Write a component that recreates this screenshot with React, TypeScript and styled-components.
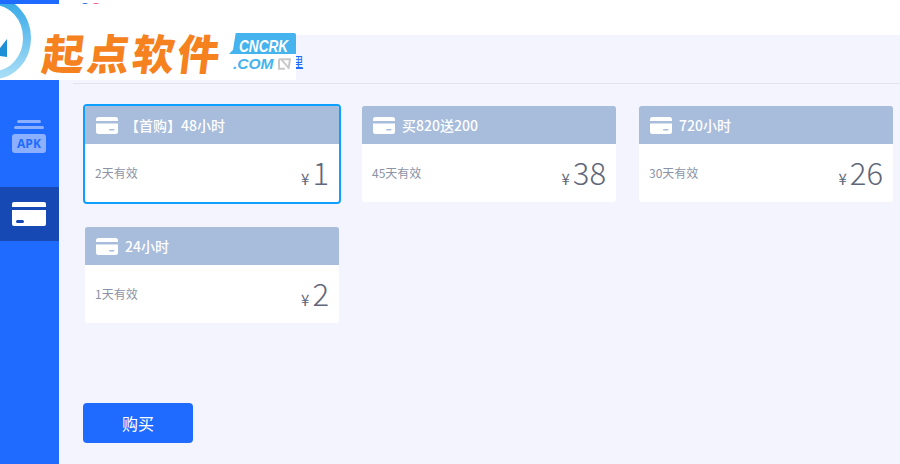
import React from "react";
import styled, { createGlobalStyle } from "styled-components";

interface PlanProps {
  title: string;
  days: string;
  price: number;
  selected?: boolean;
}

const plans: PlanProps[] = [
  { title: "【首购】48小时", days: "2天有效", price: 1, selected: true },
  { title: "买820送200", days: "45天有效", price: 38 },
  { title: "720小时", days: "30天有效", price: 26 },
  { title: "24小时", days: "1天有效", price: 2 },
];

const CardIcon = () => (
  <svg width="22" height="17" viewBox="0 0 22 17">
    <path d="M2.5 0h17A2.5 2.5 0 0 1 22 2.5V4H0V2.5A2.5 2.5 0 0 1 2.5 0z" fill="#fff" />
    <path d="M0 6.5h22v8a2.5 2.5 0 0 1-2.5 2.5h-17A2.5 2.5 0 0 1 0 14.5z" fill="#fff" />
    <rect x="13" y="12" width="5.5" height="1.6" rx="0.8" fill="#a8bcdb" />
  </svg>
);

const ApkIcon = () => (
  <ApkWrap>
    <ApkLine $w={24} />
    <ApkLine $w={30} />
    <ApkBadge>APK</ApkBadge>
  </ApkWrap>
);

const Plan: React.FC<PlanProps> = ({ title, days, price, selected }) => (
  <PlanCard $selected={selected}>
    <PlanHeader>
      <CardIcon />
      <PlanTitle>{title}</PlanTitle>
    </PlanHeader>
    <PlanBody>
      <PlanDays>{days}</PlanDays>
      <PlanPrice>
        <Yen>¥</Yen>
        <Amount>{price}</Amount>
      </PlanPrice>
    </PlanBody>
  </PlanCard>
);

export default function App() {
  return (
    <Page>
      <GlobalStyle />
      <Sidebar>
        <SideItem>
          <ApkIcon />
        </SideItem>
        <SideItem $active>
          <SideCard>
            <SideCardStripe />
            <SideCardMark />
          </SideCard>
        </SideItem>
      </Sidebar>
      <Main>
        <TopBar>
          <TopDot $color="#2f6fe8" />
          <TopDot $color="#e8578a" />
        </TopBar>
        <TabRow>
          <TabLink>理</TabLink>
        </TabRow>
        <Content>
          <PlanGrid>
            {plans.map((plan) => (
              <Plan key={plan.title} {...plan} />
            ))}
          </PlanGrid>
          <BuyButton>购买</BuyButton>
        </Content>
      </Main>
      <LogoOverlay>
        <LogoMark width="40" height="76" viewBox="0 0 40 76">
          <defs>
            <linearGradient id="ring" x1="0" y1="0" x2="0" y2="1">
              <stop offset="0" stopColor="#35a9e8" />
              <stop offset="1" stopColor="#a5dcf6" />
            </linearGradient>
          </defs>
          <ellipse cx="-6" cy="34" rx="33" ry="37" fill="none" stroke="url(#ring)" strokeWidth="8" />
          <path d="M0 44L7 35V53L0 52z" fill="#1d8fd6" />
        </LogoMark>
        <LogoText>起点软件</LogoText>
        <LogoSide>
          <LogoTag>
            <LogoTagText>CNCRK</LogoTagText>
          </LogoTag>
          <LogoCom>
            .COM
            <svg width="13" height="12" viewBox="0 0 13 12">
              <path d="M1 1.2h11L10.5 11M3 1.2l7.5 8.5M1 1.2v9.6h6" stroke="#c9c9c9" strokeWidth="2" fill="none" />
            </svg>
          </LogoCom>
        </LogoSide>
      </LogoOverlay>
    </Page>
  );
}

const GlobalStyle = createGlobalStyle`
  html, body {
    margin: 0;
    padding: 0;
    background: #f3f4fd;
  }
  * {
    box-sizing: border-box;
  }
`;

const Page = styled.div`
  position: relative;
  display: flex;
  width: 900px;
  height: 464px;
  overflow: hidden;
  font-family: "Noto Sans CJK SC", "Open Sans", sans-serif;
  background: #f3f4fd;
`;

const Sidebar = styled.div`
  width: 59px;
  flex: none;
  padding-top: 106px;
  background: #1f6bff;
`;

const SideItem = styled.div<{ $active?: boolean }>`
  display: flex;
  align-items: center;
  justify-content: center;
  height: ${(p) => (p.$active ? "54px" : "81px")};
  padding-right: 1px;
  background: ${(p) => (p.$active ? "#1749b5" : "transparent")};
`;

const ApkWrap = styled.div`
  display: flex;
  flex-direction: column;
  align-items: center;
  gap: 3px;
  margin-top: -20px;
`;

const ApkLine = styled.div<{ $w: number }>`
  width: ${(p) => p.$w}px;
  height: 3px;
  border-radius: 2px;
  background: #8cb0ff;
`;

const ApkBadge = styled.div`
  width: 34px;
  height: 19px;
  margin-top: 2px;
  border-radius: 3px;
  background: #8cb0ff;
  color: #1f6bff;
  font: bold 12px/19px "Open Sans", sans-serif;
  text-align: center;
`;

const SideCard = styled.div`
  position: relative;
  width: 34px;
  height: 24px;
  padding-top: 5px;
  border-radius: 2px;
  background: #fff;
`;

const SideCardStripe = styled.div`
  height: 3px;
  background: #1749b5;
`;

const SideCardMark = styled.div`
  position: absolute;
  left: 4px;
  bottom: 3px;
  width: 8px;
  height: 3px;
  border-radius: 2px;
  background: #1749b5;
`;

const Main = styled.div`
  flex: 1;
  display: flex;
  flex-direction: column;
  min-width: 0;
`;

const TopBar = styled.div`
  display: flex;
  gap: 1px;
  height: 35px;
  padding: 3px 0 0 21px;
  background: #fff;
`;

const TopDot = styled.div<{ $color: string }>`
  width: 10px;
  height: 8px;
  border-radius: 5px 5px 0 0;
  background: ${(p) => p.$color};
`;

const TabRow = styled.div`
  height: 49px;
  margin-left: 14px;
  padding: 13px 0 0 216px;
  border-bottom: 1px solid #e3e4ea;
`;

const TabLink = styled.span`
  color: #1f6bff;
  font-size: 14px;
  line-height: 22px;
  text-decoration: underline;
`;

const Content = styled.div`
  padding: 20px 0 0 24px;
`;

const PlanGrid = styled.div`
  display: grid;
  grid-template-columns: repeat(3, 258px);
  grid-auto-rows: 100px;
  column-gap: 19px;
  row-gap: 21px;
  height: 299px;
`;

const PlanCard = styled.div<{ $selected?: boolean }>`
  display: flex;
  flex-direction: column;
  height: 100px;
  border: 2px solid ${(p) => (p.$selected ? "#0f9fff" : "transparent")};
  border-radius: 4px;
  overflow: hidden;
`;

const PlanHeader = styled.div`
  display: flex;
  align-items: center;
  flex: none;
  height: 38px;
  padding-left: 11px;
  border-radius: 2px 2px 0 0;
  background: #a8bcdb;
`;

const PlanTitle = styled.span`
  margin: -1px 0 0 7px;
  color: #fff;
  font-size: 14px;
  font-weight: 500;
`;

const PlanBody = styled.div`
  display: flex;
  flex: 1;
  align-items: center;
  justify-content: space-between;
  padding: 0 10px;
  border-radius: 0 0 2px 2px;
  background: #fff;
`;

const PlanDays = styled.span`
  margin-top: -1px;
  color: #8b93a6;
  font-size: 12px;
`;

const PlanPrice = styled.div`
  display: flex;
  align-items: baseline;
  margin-top: -2px;
  color: #5f677a;
`;

const Yen = styled.span`
  margin-right: 3px;
  font-size: 15px;
`;

const Amount = styled.span`
  font-size: 31px;
  font-weight: 300;
  line-height: 40px;
`;

const BuyButton = styled.button`
  display: block;
  width: 110px;
  height: 40px;
  padding: 0;
  border: none;
  border-radius: 4px;
  background: #1f6bff;
  color: #fff;
  font-family: inherit;
  font-size: 16px;
`;

const LogoOverlay = styled.div`
  position: absolute;
  left: 0;
  top: 4px;
  width: 296px;
  height: 76px;
  background: #fff;
`;

const LogoMark = styled.svg`
  position: absolute;
  left: 0;
  top: 0;
`;

const LogoText = styled.div`
  position: absolute;
  left: 43px;
  top: 25px;
  color: #f5821f;
  font: 900 42px/46px "Noto Sans CJK SC", sans-serif;
  letter-spacing: 3px;
  white-space: nowrap;
  transform: skewX(-7deg);
`;

const LogoSide = styled.div`
  position: absolute;
  left: 229px;
  top: 29px;
  width: 67px;
`;

const LogoTag = styled.div`
  height: 21px;
  padding-left: 10px;
  background: #45b3ee;
  border-radius: 2px 2px 0 0;
  clip-path: polygon(10% 0, 100% 0, 100% 100%, 0 100%, 6% 80%);
`;

const LogoTagText = styled.span`
  display: inline-block;
  color: #fff;
  font: italic bold 17px/20px "Liberation Sans", sans-serif;
  white-space: nowrap;
  transform: scaleX(0.8);
  transform-origin: left center;
`;

const LogoCom = styled.div`
  display: flex;
  align-items: center;
  gap: 5px;
  height: 20px;
  padding-left: 4px;
  color: #45b3ee;
  font: italic bold 15.5px/20px "Liberation Sans", sans-serif;
`;
